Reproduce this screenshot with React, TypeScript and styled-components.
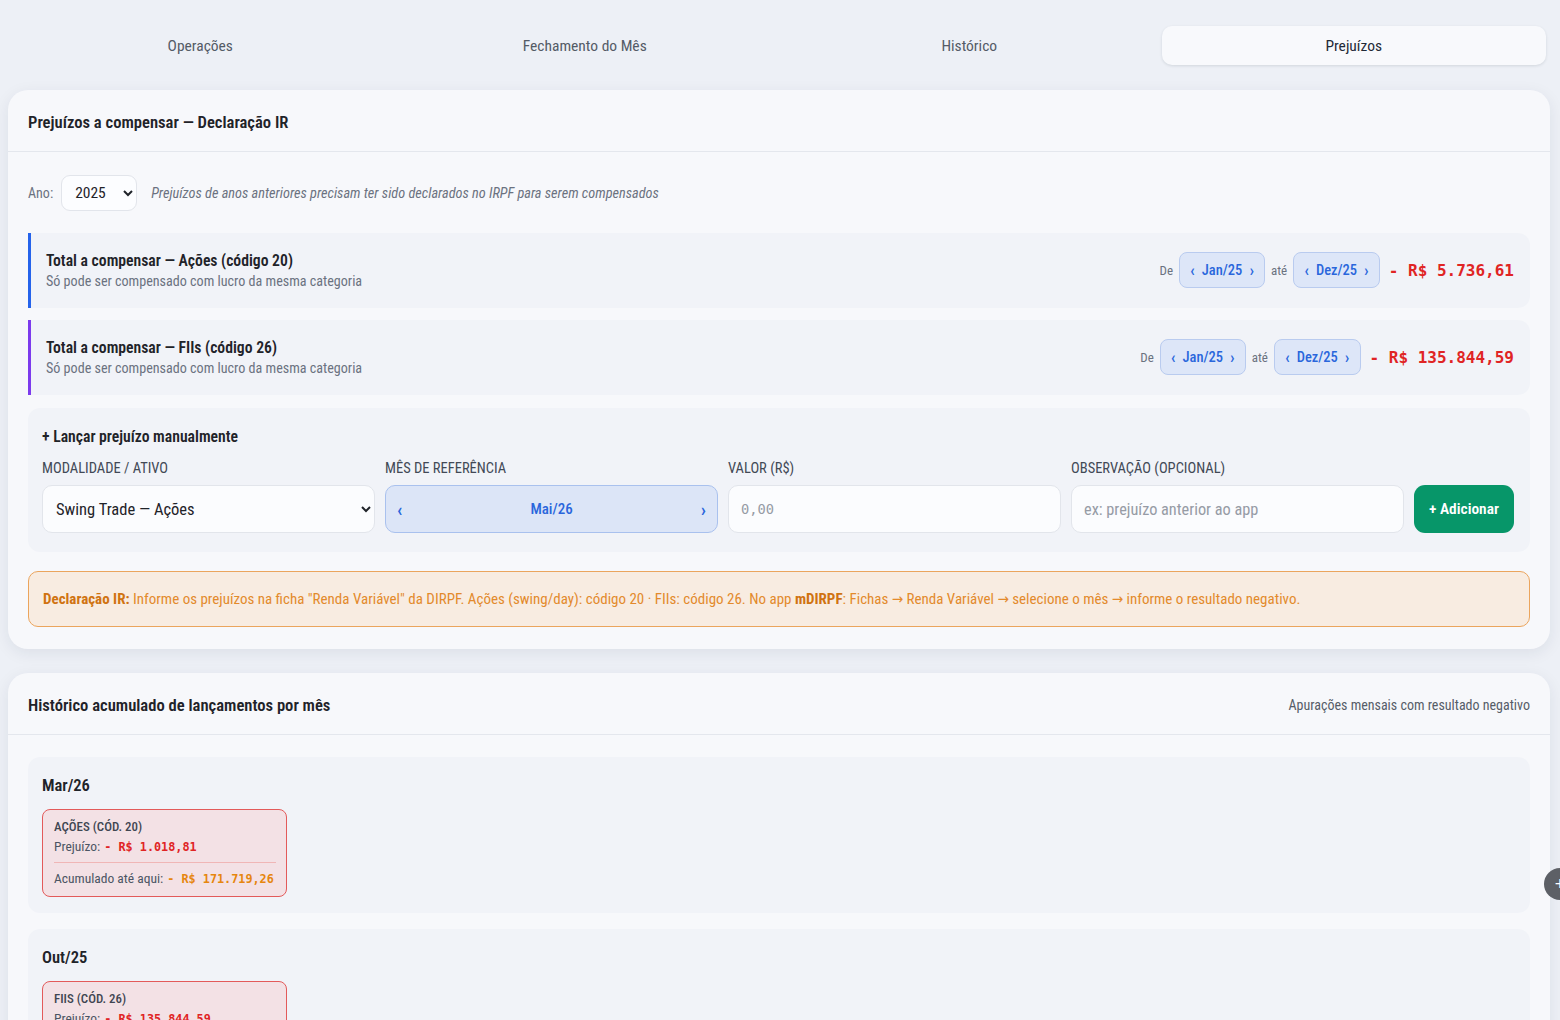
import React from "react";
import styled, { createGlobalStyle } from "styled-components";

const GlobalStyle = createGlobalStyle`
  * {
    box-sizing: border-box;
  }
  body {
    margin: 0;
    background: #edf0f6;
    color: #1f2329;
    font-family: "Roboto Condensed", "Liberation Sans Narrow", "DejaVu Sans Condensed", Roboto, sans-serif;
    font-stretch: condensed;
    overflow: hidden;
  }
`;

const MONO = `"DejaVu Sans Mono", "Liberation Mono", monospace`;

const Page = styled.div`
  padding: 22px 10px 0 8px;
  height: 1020px;
  overflow: hidden;
`;

const Tabs = styled.nav`
  display: grid;
  grid-template-columns: repeat(4, 1fr);
  padding: 4px 4px 3px 0;
  height: 46px;
`;

const Tab = styled.button<{ $active?: boolean }>`
  border: 0;
  border-radius: 10px;
  font: inherit;
  font-size: 15.5px;
  font-weight: 400;
  cursor: pointer;
  color: ${(p) => (p.$active ? "#1f2937" : "#545b66")};
  background: ${(p) => (p.$active ? "#f8f9fc" : "transparent")};
  box-shadow: ${(p) =>
    p.$active ? "0 1px 3px rgba(20, 30, 50, 0.12)" : "none"};
`;

const Card = styled.section<{ $gap?: number }>`
  margin-top: ${(p) => p.$gap ?? 22}px;
  background: #f7f8fb;
  border-radius: 20px;
  box-shadow: 0 4px 16px rgba(30, 40, 60, 0.08);
`;

const CardHeader = styled.header`
  display: flex;
  align-items: center;
  justify-content: space-between;
  height: 62px;
  padding: 3px 20px 0;
  border-bottom: 1px solid #e4e7ed;
`;

const CardTitle = styled.h2`
  margin: 0;
  font-size: 16.6px;
  font-weight: 600;
  color: #1f2329;
`;

const HeaderNote = styled.span`
  font-size: 14px;
  color: #565d68;
`;

const CardBody = styled.div`
  display: flex;
  flex-direction: column;
  gap: 12px;
  padding: 23px 20px 22px;
`;

const YearRow = styled.div`
  display: flex;
  align-items: center;
  gap: 8px;
  margin-bottom: 10px;
`;

const YearLabel = styled.span`
  font-size: 14px;
  color: #6b7280;
`;

const YearSelect = styled.select`
  width: 76px;
  height: 36px;
  padding: 0 6px 0 9px;
  border: 1px solid #e2e5eb;
  border-radius: 9px;
  background: #fcfdff;
  font: inherit;
  font-size: 15.5px;
  color: #1f2329;
`;

const Hint = styled.span`
  margin-left: 6px;
  font-size: 14.3px;
  font-style: italic;
  color: #6b7280;
`;

const TotalRow = styled.div<{ $accent: string }>`
  display: flex;
  align-items: center;
  justify-content: space-between;
  min-height: 75px;
  padding: 0 16px 1px 15px;
  background: #f1f3f8;
  border-left: 3px solid ${(p) => p.$accent};
  border-radius: 0 12px 12px 0;
`;

const TotalTitle = styled.div`
  font-size: 15.7px;
  font-weight: 600;
  color: #1f2329;
`;

const TotalSub = styled.div`
  margin-top: 3px;
  font-size: 14.1px;
  color: #6b7280;
`;

const RangeGroup = styled.div`
  display: flex;
  align-items: center;
  gap: 6px;
`;

const RangeWord = styled.span`
  font-size: 13px;
  color: #6b7280;
`;

const Chevron = styled.span<{ $size?: number }>`
  font-size: ${(p) => p.$size ?? 17}px;
  line-height: 1;
  font-weight: 500;
`;

const MonthPill = styled.button`
  display: inline-flex;
  align-items: center;
  gap: 7px;
  height: 36px;
  padding: 0 10px;
  border: 1.5px solid #b9cbef;
  border-radius: 8px;
  background: #dde6f8;
  color: #2a66dc;
  font: inherit;
  font-size: 14.5px;
  font-weight: 500;
`;

const Amount = styled.span`
  margin-left: 3px;
  font-family: ${MONO};
  font-stretch: normal;
  font-size: 16px;
  font-weight: 700;
  color: #e02424;
`;

const ManualPanel = styled.div`
  margin-top: 1px;
  padding: 19px 16px 19px 14px;
  background: #f1f3f8;
  border-radius: 12px;
`;

const ManualTitle = styled.div`
  font-size: 15.7px;
  font-weight: 600;
  line-height: 20px;
`;

const FieldGrid = styled.div`
  display: grid;
  grid-template-columns: repeat(4, 1fr) 100px;
  column-gap: 10px;
  align-items: end;
  margin-top: 14px;
`;

const Field = styled.label`
  display: flex;
  flex-direction: column;
  gap: 8px;
`;

const FieldLabel = styled.span`
  font-size: 14.5px;
  font-weight: 400;
  line-height: 16px;
  text-transform: uppercase;
  color: #424956;
`;

const inputBase = `
  height: 48px;
  width: 100%;
  padding: 0 12px;
  border: 1px solid #e2e5eb;
  border-radius: 10px;
  background: #fbfcfe;
  color: #1f2329;
`;

const TextInput = styled.input<{ $mono?: boolean }>`
  ${inputBase}
  font-family: ${(p) => (p.$mono ? MONO : "inherit")};
  font-stretch: ${(p) => (p.$mono ? "normal" : "condensed")};
  font-size: ${(p) => (p.$mono ? 13.7 : 16.3)}px;
  &::placeholder {
    color: #969ba5;
  }
`;

const SelectInput = styled.select`
  ${inputBase}
  padding-left: 9px;
  font-family: inherit;
  font-size: 16.5px;
`;

const MonthStepper = styled.div`
  display: flex;
  align-items: center;
  justify-content: space-between;
  height: 48px;
  padding: 0 11px;
  border: 1.5px solid #a9c1ee;
  border-radius: 10px;
  background: #dce5f7;
  color: #2a66dc;
  font-size: 15px;
  font-weight: 500;
`;

const AddButton = styled.button`
  height: 48px;
  border: 0;
  border-radius: 11px;
  background: #079669;
  color: #fff;
  font: inherit;
  font-size: 15.4px;
  font-weight: 600;
`;

const Notice = styled.div`
  margin-top: 7px;
  display: flex;
  align-items: center;
  min-height: 56px;
  padding: 0 14px;
  border: 1.5px solid #eba55d;
  border-radius: 10px;
  background: #f8ece1;
  color: #e38a2c;
  font-size: 15px;
  b {
    color: #d07311;
    font-weight: 700;
  }
`;

const HistoryBody = styled.div`
  display: flex;
  flex-direction: column;
  gap: 16px;
  padding: 22px 20px;
`;

const MonthGroup = styled.div`
  padding: 18px 14px 16px;
  background: #f1f3f8;
  border-radius: 12px;
`;

const MonthTitle = styled.div`
  font-size: 16.5px;
  font-weight: 600;
  line-height: 22px;
`;

const EntryList = styled.div`
  display: flex;
  flex-wrap: wrap;
  gap: 10px;
  margin-top: 12px;
`;

const EntryCard = styled.div`
  width: 245px;
  padding: 8px 10px 7px 11px;
  border: 1.5px solid #e35a5a;
  border-radius: 8px;
  background: #f3e1e5;
`;

const EntryCat = styled.div`
  font-size: 12.9px;
  font-weight: 500;
  line-height: 18px;
  color: #3f4652;
`;

const EntryLine = styled.div`
  display: flex;
  align-items: baseline;
  gap: 4px;
  white-space: nowrap;
  font-size: 13.5px;
  line-height: 20px;
  color: #4b5563;
`;

const EntryDivider = styled.hr`
  margin: 5px 0;
  border: 0;
  border-top: 1px solid #f0b6b6;
`;

const EntryMoney = styled.span<{ $tone: string }>`
  font-family: ${MONO};
  font-stretch: normal;
  font-size: 11.8px;
  font-weight: 700;
  color: ${(p) => p.$tone};
`;

const Fab = styled.button`
  position: fixed;
  top: 868px;
  right: -16px;
  width: 32px;
  height: 32px;
  border: 0;
  border-radius: 50%;
  background: #5d6066;
  color: #fff;
  font-size: 18px;
  line-height: 32px;
  padding: 0;
`;

const RED = "#e02424";
const ORANGE = "#e6860f";

const tabs = ["Operações", "Fechamento do Mês", "Histórico", "Prejuízos"];

const totals = [
  { title: "Total a compensar — Ações (código 20)", accent: "#2563eb", value: "- R$ 5.736,61" },
  { title: "Total a compensar — FIIs (código 26)", accent: "#7c3aed", value: "- R$ 135.844,59" },
];

const history = [
  {
    month: "Mar/26",
    entries: [
      { cat: "AÇÕES (CÓD. 20)", loss: "- R$ 1.018,81", acc: "- R$ 171.719,26" },
    ],
  },
  {
    month: "Out/25",
    entries: [
      { cat: "FIIS (CÓD. 26)", loss: "- R$ 135.844,59", acc: "- R$ 135.844,59" },
    ],
  },
];

function Pill({ label }: { label: string }) {
  return (
    <MonthPill>
      <Chevron>‹</Chevron>
      {label}
      <Chevron>›</Chevron>
    </MonthPill>
  );
}

export default function App() {
  return (
    <>
      <GlobalStyle />
      <Page>
        <Tabs>
          {tabs.map((t) => (
            <Tab key={t} $active={t === "Prejuízos"}>
              {t}
            </Tab>
          ))}
        </Tabs>

        <Card>
          <CardHeader>
            <CardTitle>Prejuízos a compensar — Declaração IR</CardTitle>
          </CardHeader>
          <CardBody>
            <YearRow>
              <YearLabel>Ano:</YearLabel>
              <YearSelect defaultValue="2025">
                <option>2025</option>
                <option>2026</option>
              </YearSelect>
              <Hint>
                Prejuízos de anos anteriores precisam ter sido declarados no IRPF para serem
                compensados
              </Hint>
            </YearRow>

            {totals.map((t) => (
              <TotalRow key={t.title} $accent={t.accent}>
                <div>
                  <TotalTitle>{t.title}</TotalTitle>
                  <TotalSub>Só pode ser compensado com lucro da mesma categoria</TotalSub>
                </div>
                <RangeGroup>
                  <RangeWord>De</RangeWord>
                  <Pill label="Jan/25" />
                  <RangeWord>até</RangeWord>
                  <Pill label="Dez/25" />
                  <Amount>{t.value}</Amount>
                </RangeGroup>
              </TotalRow>
            ))}

            <ManualPanel>
              <ManualTitle>+ Lançar prejuízo manualmente</ManualTitle>
              <FieldGrid>
                <Field>
                  <FieldLabel>Modalidade / Ativo</FieldLabel>
                  <SelectInput defaultValue="swing-acoes">
                    <option value="swing-acoes">Swing Trade — Ações</option>
                    <option value="day-acoes">Day Trade — Ações</option>
                    <option value="fiis">FIIs</option>
                  </SelectInput>
                </Field>
                <Field>
                  <FieldLabel>Mês de referência</FieldLabel>
                  <MonthStepper>
                    <Chevron $size={19}>‹</Chevron>
                    <span>Mai/26</span>
                    <Chevron $size={19}>›</Chevron>
                  </MonthStepper>
                </Field>
                <Field>
                  <FieldLabel>Valor (R$)</FieldLabel>
                  <TextInput $mono placeholder="0,00" />
                </Field>
                <Field>
                  <FieldLabel>Observação (opcional)</FieldLabel>
                  <TextInput placeholder="ex: prejuízo anterior ao app" />
                </Field>
                <AddButton>+ Adicionar</AddButton>
              </FieldGrid>
            </ManualPanel>

            <Notice>
              <span>
                <b>Declaração IR:</b> Informe os prejuízos na ficha "Renda Variável" da DIRPF.
                Ações (swing/day): código 20 · FIIs: código 26. No app <b>mDIRPF</b>: Fichas →
                Renda Variável → selecione o mês → informe o resultado negativo.
              </span>
            </Notice>
          </CardBody>
        </Card>

        <Card $gap={24}>
          <CardHeader>
            <CardTitle>Histórico acumulado de lançamentos por mês</CardTitle>
            <HeaderNote>Apurações mensais com resultado negativo</HeaderNote>
          </CardHeader>
          <HistoryBody>
            {history.map((g) => (
              <MonthGroup key={g.month}>
                <MonthTitle>{g.month}</MonthTitle>
                <EntryList>
                  {g.entries.map((e) => (
                    <EntryCard key={e.cat}>
                      <EntryCat>{e.cat}</EntryCat>
                      <EntryLine>
                        Prejuízo: <EntryMoney $tone={RED}>{e.loss}</EntryMoney>
                      </EntryLine>
                      <EntryDivider />
                      <EntryLine>
                        Acumulado até aqui: <EntryMoney $tone={ORANGE}>{e.acc}</EntryMoney>
                      </EntryLine>
                    </EntryCard>
                  ))}
                </EntryList>
              </MonthGroup>
            ))}
          </HistoryBody>
        </Card>
        <Fab>+</Fab>
      </Page>
    </>
  );
}
